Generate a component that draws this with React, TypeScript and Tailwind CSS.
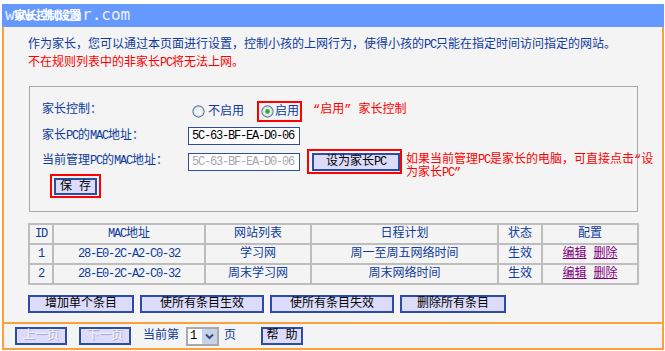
import React from "react";

const L = ({ children }: { children: React.ReactNode }) => (
  <span className="tracking-[-1.2px]">{children}</span>
);

function Radio({ checked }: { checked?: boolean }) {
  return (
    <svg width="13" height="13" viewBox="0 0 13 13" className="shrink-0">
      <circle cx="6.5" cy="6.5" r="5.6" fill="#f3f5f8" stroke="#56789f" strokeWidth="1.1" />
      <circle cx="6.5" cy="6.5" r="4.4" fill="none" stroke="#c9d3df" strokeWidth="0.8" />
      {checked && <circle cx="6.5" cy="6.5" r="2.4" fill="#2bb12b" />}
    </svg>
  );
}

function Btn({
  w,
  children,
  disabled,
  h = "h-[18px]",
}: {
  w: string;
  children: React.ReactNode;
  disabled?: boolean;
  h?: string;
}) {
  return (
    <div
      className={`${w} ${h} shrink-0 whitespace-nowrap flex items-center justify-center bg-[#dcdcfa] border-2 border-[#2c4ca6] leading-none ${
        disabled ? "text-[#f6f6ff] [text-shadow:1px_1px_0_#a9a9cc]" : "text-black"
      }`}
    >
      {children}
    </div>
  );
}

export default function App() {
  const blue = "text-[#0d3a9c]";
  return (
    <div className="w-[665px] h-[351px] bg-white pt-[4px] pl-[2px] overflow-hidden text-[12px] leading-[18px] [font-family:'Liberation_Mono','Noto_Sans_CJK_SC',monospace]">
      <div className="w-[662px]">
        {/* Title bar */}
        <div className="relative h-[23px] bg-[#6699ff]">
          <div className="absolute left-[3px] top-[3px] text-[16px] leading-[16px] text-[#eef2ff] [font-family:'DejaVu_Sans_Mono',monospace]">
            www.kocar.com
          </div>
          <div className="absolute left-[12px] top-[4px] text-[12px] leading-[14px] font-bold text-white [font-family:'Noto_Sans_CJK_SC',sans-serif] tracking-[-1px]">
            家长控制设置
          </div>
        </div>

        {/* Content frame */}
        <div className="bg-[#f4f4f4] border-l-2 border-r-2 border-b-2 border-[#f9a23c]">
          <div className="h-[295px] pt-[9px] pl-[24px]">
            <div className={`${blue} whitespace-nowrap`}>
              作为家长，您可以通过本页面进行设置，控制小孩的上网行为，使得小孩的<L>PC</L>只能在指定时间访问指定的网站。
            </div>
            <div className="text-[#ff0000] whitespace-nowrap">
              不在规则列表中的非家长<L>PC</L>将无法上网。
            </div>

            {/* Settings box */}
            <div className="mt-[14px] ml-[1px] w-[609px] h-[126px] border border-[#a9a9a9] pl-[12px] pt-[14px]">
              {/* Row 1 */}
              <div className="h-[21px] flex items-center whitespace-nowrap">
                <div className={`w-[146px] shrink-0 ${blue} -mt-[3px]`}>家长控制：</div>
                <div className="ml-[4px] shrink-0 flex items-center gap-[3px]">
                  <Radio />
                  <span className={blue}>不启用</span>
                </div>
                <div className="ml-[13px] shrink-0 w-[45px] h-[21px] border-2 border-[#ff0000] flex items-center pl-[2px] gap-[1px]">
                  <Radio checked />
                  <span className={blue}>启用</span>
                </div>
                <div className="ml-[11px] shrink-0 -mt-[3px] text-[#ff0000]">
                  “启用” 家长控制
                </div>
              </div>

              {/* Row 2 */}
              <div className="mt-[5px] h-[18px] flex items-center whitespace-nowrap">
                <div className={`w-[146px] shrink-0 ${blue}`}>
                  家长<L>PC</L>的<L>MAC</L>地址：
                </div>
                <div className="w-[112px] shrink-0 h-[18px] border border-[#2c4ca6] bg-white pl-[3px] flex items-center text-black leading-none">
                  <L>5C-63-BF-EA-D0-06</L>
                </div>
              </div>

              {/* Row 3 */}
              <div className="mt-[4px] h-[25px] flex items-start whitespace-nowrap">
                <div className={`w-[146px] shrink-0 ${blue} mt-[3px]`}>
                  当前管理<L>PC</L>的<L>MAC</L>地址：
                </div>
                <div className="mt-[4px] shrink-0 w-[112px] h-[18px] border border-[#2c4ca6] bg-white pl-[3px] flex items-center text-[#a8a8a8] leading-none">
                  <L>5C-63-BF-EA-D0-06</L>
                </div>
                <div className="ml-[7px] shrink-0 w-[95px] h-[25px] border-2 border-[#ff0000] pl-[3px] pt-[2px]">
                  <Btn w="w-[88px]">
                    设为家长<L>PC</L>
                  </Btn>
                </div>
                <div className="ml-[4px] shrink-0 mt-[5px] text-[#ff0000] leading-[13px]">
                  如果当前管理<L>PC</L>是家长的电脑，可直接点击“设
                  <br />
                  为家长<L>PC</L>”
                </div>
              </div>

              {/* Row 4 */}
              <div className="ml-[8px] w-[51px] h-[24px] border-2 border-[#ff0000] pl-[2px] pt-[2px]">
                <Btn w="w-[43px]" h="h-[17px]">
                  保&nbsp;存
                </Btn>
              </div>
            </div>

            {/* Table */}
            <table className="mt-[11px] w-[609px] table-fixed border-collapse border-2 border-[#bdbdbd] text-center whitespace-nowrap">
              <colgroup>
                <col className="w-[24px]" />
                <col className="w-[152px]" />
                <col className="w-[106px]" />
                <col className="w-[187px]" />
                <col className="w-[44px]" />
                <col className="w-[96px]" />
              </colgroup>
              <tbody className={blue}>
                <tr className="h-[19px]">
                  <td className="border-2 border-[#bdbdbd] p-0"><L>ID</L></td>
                  <td className="border-2 border-[#bdbdbd] p-0"><L>MAC</L>地址</td>
                  <td className="border-2 border-[#bdbdbd] p-0">网站列表</td>
                  <td className="border-2 border-[#bdbdbd] p-0">日程计划</td>
                  <td className="border-2 border-[#bdbdbd] p-0">状态</td>
                  <td className="border-2 border-[#bdbdbd] p-0">配置</td>
                </tr>
                {[
                  { id: "1", site: "学习网", plan: "周一至周五网络时间" },
                  { id: "2", site: "周末学习网", plan: "周末网络时间" },
                ].map((r) => (
                  <tr key={r.id} className="h-[20px]">
                    <td className="border-2 border-[#bdbdbd] p-0"><L>{r.id}</L></td>
                    <td className="border-2 border-[#bdbdbd] p-0"><L>28-E0-2C-A2-C0-32</L></td>
                    <td className="border-2 border-[#bdbdbd] p-0">{r.site}</td>
                    <td className="border-2 border-[#bdbdbd] p-0">{r.plan}</td>
                    <td className="border-2 border-[#bdbdbd] p-0">生效</td>
                    <td className="border-2 border-[#bdbdbd] p-0">
                      <span className="text-[#800080] underline">编辑</span>
                      <span className="ml-[7px] text-[#800080] underline">删除</span>
                    </td>
                  </tr>
                ))}
              </tbody>
            </table>

            {/* Buttons */}
            <div className="mt-[10px] flex gap-[6px]">
              <Btn w="w-[106px]">增加单个条目</Btn>
              <Btn w="w-[124px]">使所有条目生效</Btn>
              <Btn w="w-[124px]">使所有条目失效</Btn>
              <Btn w="w-[106px]">删除所有条目</Btn>
            </div>
          </div>

          {/* Footer */}
          <div className="h-[26px] border-t-2 border-[#f9a23c] pl-[11px] flex items-center whitespace-nowrap">
            <Btn w="w-[52px]" disabled>
              上一页
            </Btn>
            <div className="ml-[12px]">
              <Btn w="w-[52px]" disabled>
                下一页
              </Btn>
            </div>
            <span className={`ml-[12px] ${blue}`}>当前第</span>
            <div className="ml-[7px] w-[33px] h-[19px] border-2 border-[#a9a9a9] bg-white flex items-stretch">
              <span className="pl-[2px] w-[14px] text-black leading-[15px]">1</span>
              <div className="flex-1 bg-[#c3d4ec] flex items-center justify-center">
                <svg width="9" height="7" viewBox="0 0 9 7">
                  <polyline points="1,1.5 4.5,5 8,1.5" fill="none" stroke="#3a4e6a" strokeWidth="2" />
                </svg>
              </div>
            </div>
            <span className={`ml-[5px] ${blue}`}>页</span>
            <div className="ml-[25px]">
              <Btn w="w-[42px]">帮&nbsp;助</Btn>
            </div>
          </div>
        </div>
      </div>
    </div>
  );
}
